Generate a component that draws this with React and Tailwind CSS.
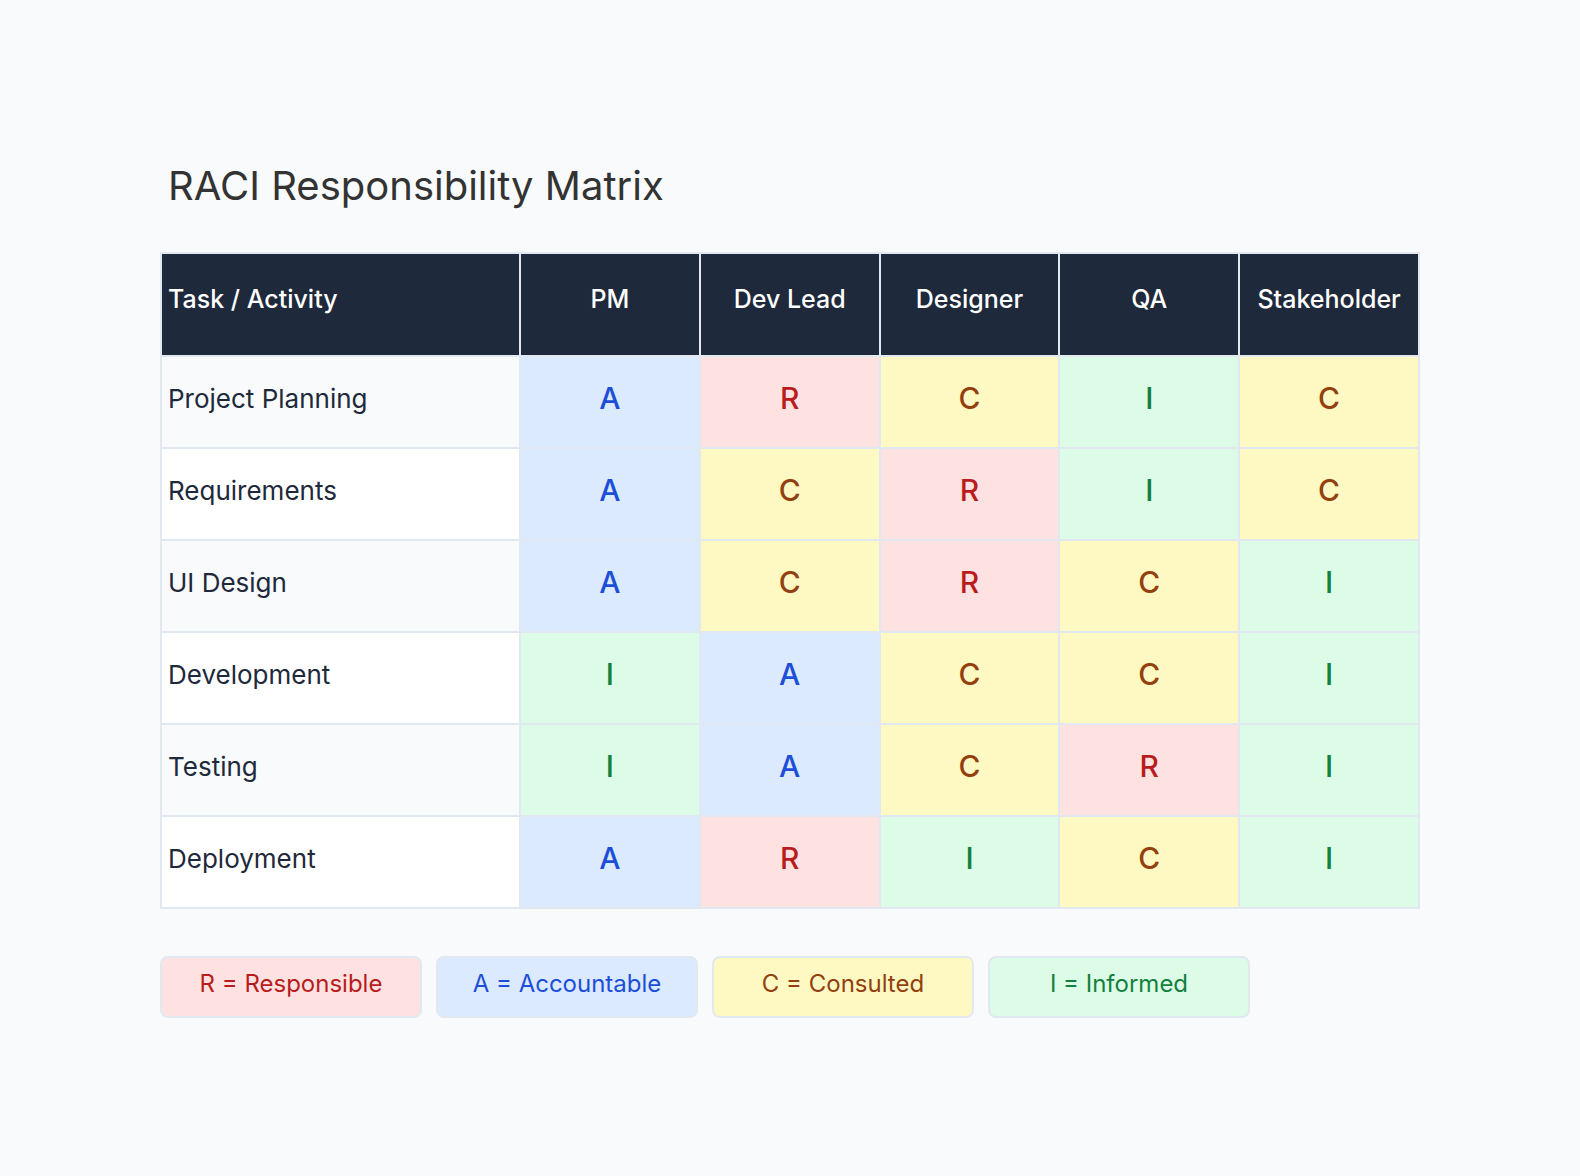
import React from "react";

const roles = ["PM", "Dev Lead", "Designer", "QA", "Stakeholder"];

const rows = [
  { task: "Project Planning", cells: ["A", "R", "C", "I", "C"] },
  { task: "Requirements", cells: ["A", "C", "R", "I", "C"] },
  { task: "UI Design", cells: ["A", "C", "R", "C", "I"] },
  { task: "Development", cells: ["I", "A", "C", "C", "I"] },
  { task: "Testing", cells: ["I", "A", "C", "R", "I"] },
  { task: "Deployment", cells: ["A", "R", "I", "C", "I"] },
];

// colour per RACI letter
const tone = {
  R: "bg-[#fee2e2] text-[#b91c1c]",
  A: "bg-[#dbeafe] text-[#1d4ed8]",
  C: "bg-[#fef9c3] text-[#92400e]",
  I: "bg-[#dcfce7] text-[#15803d]",
};

const legend = [
  { key: "R", label: "R = Responsible" },
  { key: "A", label: "A = Accountable" },
  { key: "C", label: "C = Consulted" },
  { key: "I", label: "I = Informed" },
];

function App() {
  return (
    <div
      className="min-h-screen bg-[#f8fafc] pt-[162px] pl-[160px]"
      style={{ fontFamily: "Inter, 'Noto Sans', sans-serif" }}
    >
      <div className="w-[1260px]">
        <h1 className="pl-2 text-[40px] leading-[48px] font-normal text-[#333333]">
          RACI Responsibility Matrix
        </h1>

        <table className="mt-[42px] w-[1260px] table-fixed border-collapse">
          <colgroup>
            <col className="w-[359px]" />
            {roles.map((r) => (
              <col key={r} />
            ))}
          </colgroup>
          <thead>
            <tr className="h-[103px] bg-[#1e293b] text-white">
              <th className="border-2 border-[#e2e8f0] pl-[6px] pr-2 pb-[9px] text-left text-[25px] font-medium">
                Task / Activity
              </th>
              {roles.map((r) => (
                <th
                  key={r}
                  className="border-2 border-[#e2e8f0] px-2 pb-[9px] text-center text-[25px] font-medium"
                >
                  {r}
                </th>
              ))}
            </tr>
          </thead>
          <tbody>
            {rows.map((row, i) => (
              <tr key={row.task} className="h-[92px]">
                <td
                  className={`border-2 border-[#e2e8f0] pl-[6px] pr-2 pb-[8px] text-[26px] text-[#1e293b] ${
                    i % 2 === 0 ? "bg-[#f8fafc]" : "bg-white"
                  }`}
                >
                  {row.task}
                </td>
                {row.cells.map((c, j) => (
                  <td
                    key={j}
                    className={`border-2 border-[#e2e8f0] pb-[8px] text-center text-[30px] font-medium ${tone[c]}`}
                  >
                    {c}
                  </td>
                ))}
              </tr>
            ))}
          </tbody>
        </table>

        <div className="mt-[47px] flex gap-[14px]">
          {legend.map((l) => (
            <div
              key={l.key}
              className={`flex h-[62px] w-[262px] items-center justify-center rounded-lg border-2 border-[#e2e8f0] pb-[7px] text-[24px] ${tone[l.key]}`}
            >
              {l.label}
            </div>
          ))}
        </div>
      </div>
    </div>
  );
}

export default App;
